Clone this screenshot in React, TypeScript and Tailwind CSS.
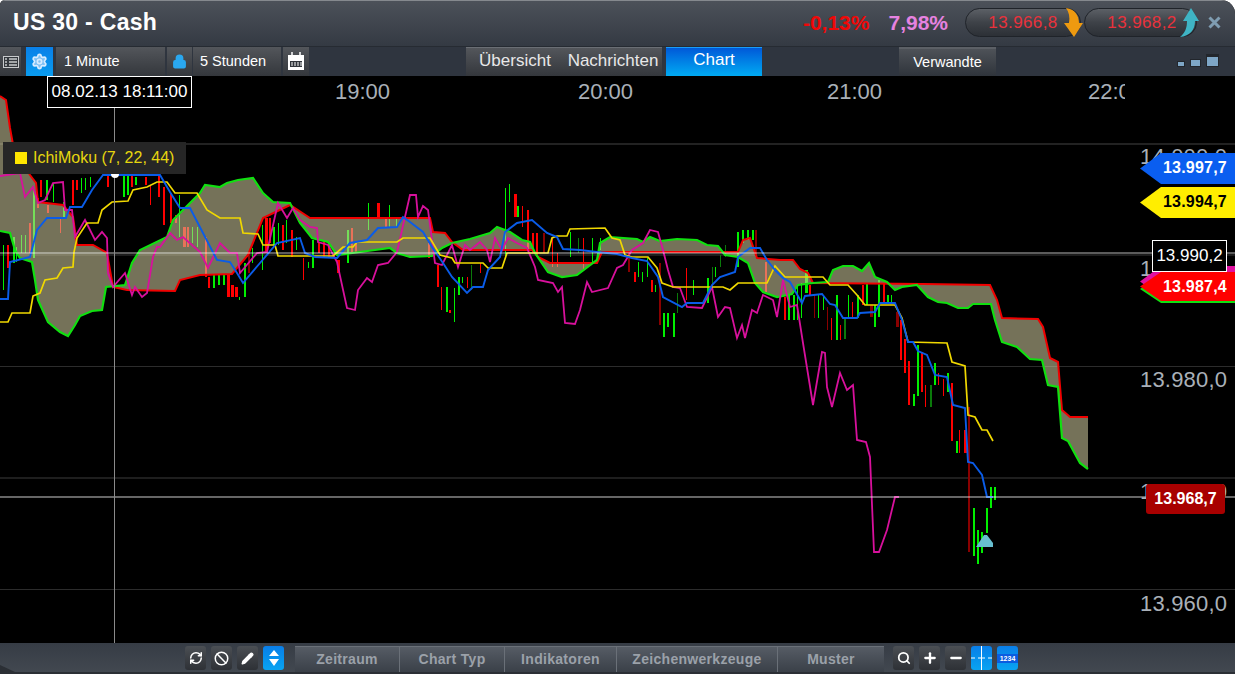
import { Ban, Lock, Minus, Pencil, Plus, RefreshCw, Search, Settings } from "lucide-react"

type Bar = [number, number, number, number]

const FONT = "font-['Liberation_Sans',Arial,sans-serif]"

const greenEdge = "0,231 10,233 15,250 20,258 32,262 35,280 38,300 48,322 60,332 68,336 75,325 80,316 92,311 102,310 106,287 125,285 132,263 140,250 167,237 173,220 200,193 205,185 220,187 227,183 238,180 253,178 263,193 273,202 290,203 300,223 312,238 328,242 337,255 360,252 390,248 397,253 410,257 432,256 442,248 452,243 470,239 490,233 497,227 510,232 522,240 530,242 535,253 548,272 562,277 577,275 597,260 600,243 610,237 637,239 643,242 650,237 660,241 677,239 697,240 707,245 718,246 725,255 738,257 748,263 755,283 763,292 777,297 792,294 798,285 813,283 828,282 833,270 843,266 853,266 862,271 869,263 875,277 887,282 895,290 902,287 917,285 928,297 938,302 947,303 958,308 968,308 973,304 991,304 995,320 1002,342 1017,347 1030,359 1042,360 1048,385 1058,387 1062,438 1068,441 1080,463 1088,469"
const redEdge = "0,96 6,100 10,128 14,150 30,175 36,183 38,202 63,205 73,217 77,245 93,245 107,253 113,287 127,290 175,291 180,280 200,275 232,274 248,255 263,218 290,205 310,218 430,218 433,232 445,233 452,242 463,250 533,250 538,257 550,263 597,263 602,252 738,252 743,240 750,238 757,258 780,260 793,260 800,269 808,273 813,283 923,284 990,285 997,300 1002,318 1038,319 1043,327 1050,358 1058,362 1062,410 1070,417 1088,417"
const cloud = `${greenEdge} ${redEdge.split(" ").reverse().join(" ")}`

const blueLine = "0,299 8,299 10,262 30,257 37,230 47,218 66,218 70,207 82,207 92,190 103,175 160,175 170,192 180,208 190,208 203,233 217,260 230,262 237,273 243,283 260,263 277,243 300,238 305,253 315,257 337,258 350,243 367,240 378,228 397,227 403,217 410,222 423,232 432,247 443,263 452,277 467,293 473,287 483,287 488,270 500,257 505,232 517,223 532,220 547,233 557,237 563,249 580,250 597,252 617,254 632,258 647,261 658,277 663,297 682,307 687,303 703,303 712,285 720,277 735,272 738,257 750,248 760,248 767,260 775,270 783,278 790,282 802,303 805,296 822,294 830,304 835,305 843,318 857,318 860,313 875,312 880,303 895,303 902,320 908,342 913,342 918,351 927,355 935,375 947,377 953,405 965,408 968,462 973,463 982,475 987,497 993,497"
const yellowLine = "0,322 8,322 12,313 30,313 33,296 40,293 45,280 57,278 63,268 73,267 74,252 77,238 87,223 98,223 102,210 112,202 128,201 133,190 147,187 157,182 167,182 175,193 197,193 207,210 220,218 240,218 243,233 258,234 263,245 275,245 278,256 333,256 343,247 353,247 357,242 397,242 403,238 430,238 440,255 452,258 455,263 483,263 488,268 502,268 507,253 548,253 552,238 557,236 567,236 570,229 605,228 612,238 620,240 625,255 632,257 648,257 657,268 662,283 673,287 723,287 730,290 738,283 767,283 775,266 785,277 823,277 830,285 848,285 857,295 865,305 895,305 902,318 908,342 947,343 952,362 965,366 968,415 975,417 982,430 987,430 993,441"
const magentaLine = "0,176 20,173 25,197 33,187 38,203 45,200 53,183 63,182 65,210 72,210 75,237 85,220 95,240 102,232 107,238 108,273 113,287 125,273 132,295 135,287 142,297 147,293 153,257 157,247 160,247 170,233 177,240 183,237 200,252 208,268 220,243 230,253 237,253 240,273 257,253 267,252 278,203 287,218 293,208 300,220 310,227 317,228 318,242 328,245 337,262 347,308 355,310 358,290 367,278 372,282 378,265 388,263 397,252 410,195 416,195 418,217 423,206 428,210 435,263 442,265 452,245 458,267 465,245 470,250 480,242 487,250 490,262 495,238 502,250 508,238 517,243 527,248 535,267 538,280 553,283 558,292 562,287 565,323 575,324 580,310 587,282 592,292 608,288 617,268 623,265 632,250 643,243 650,230 658,232 663,250 668,270 673,287 680,288 687,307 702,308 712,287 718,317 725,307 730,308 737,338 742,325 745,338 752,310 757,313 763,295 773,300 777,317 783,280 790,307 797,305 803,343 813,405 822,352 825,353 827,387 832,407 840,373 847,390 853,385 857,440 866,442 870,457 874,552 879,552 887,530 895,497 899,497"

const redBars: Bar[] = [
  [7,245,268,2],[40,180,197,2],[72,180,205,2],[76,180,190,2],[107,173,187,2],[131,175,187,2],[145,177,185,2],[150,185,205,1],[158,175,197,2],[163,187,225,2],[170,193,223,2],[175,215,223,2],[183,227,247,3],[187,227,247,2],[205,237,277,2],[208,277,288,2],[227,275,297,3],[231,285,297,3],[235,287,297,3],[265,218,253,3],[269,218,243,2],[282,225,250,2],[291,230,257,2],[303,258,280,1],[318,242,253,2],[323,242,257,2],[328,243,257,2],[337,260,273,3],[351,228,253,2],[355,242,252,2],[377,203,217,3],[385,217,227,2],[29,223,253,2],[37,198,208,2],[47,205,213,2],[60,218,233,1],
  [428,243,258,2],[437,265,287,2],[441,287,310,1],[449,310,313,2],[467,277,288,1],[480,263,273,1],[514,194,217,3],[522,206,227,1],[527,210,250,2],[532,233,253,2],[536,233,257,2],[552,238,267,1],[557,253,267,1],[583,238,270,1],[634,272,282,2],[651,280,292,2],[686,268,300,1],[765,262,292,2],
  [784,297,320,2],[809,285,295,2],[831,318,340,1],[840,325,340,1],[852,302,318,1],[862,285,305,2],[883,283,303,2],[900,320,360,2],[904,339,373,2],[908,361,405,2],[921,352,392,2],[925,385,407,1],[938,373,385,1],[943,379,396,1],[951,383,441,2],[959,430,453,1],[964,430,453,3],
]
const greenBars: Bar[] = [
  [3,245,290,1],[13,237,263,2],[16,247,262,1],[21,235,253,1],[25,235,253,1],[33,190,258,2],[46,180,200,2],[53,183,202,1],[63,202,218,2],[81,178,193,1],[85,178,190,1],[90,177,187,1],[123,175,197,2],[127,175,195,2],[135,177,185,2],[179,195,237,1],[192,227,243,1],[197,227,247,1],[213,275,288,2],[218,275,285,2],[223,275,285,2],[244,263,297,2],[239,297,300,1],[252,248,263,1],[262,225,270,1],[273,227,247,2],[278,223,245,1],[286,220,243,1],[296,237,250,1],[312,240,268,2],[308,262,268,1],[347,230,263,2],[368,203,230,1],[389,205,227,1],[396,218,227,1],
  [446,287,312,2],[454,288,322,1],[458,277,295,2],[462,277,283,1],[505,188,257,1],[509,184,202,1],[517,206,217,2],[570,232,257,1],[592,238,263,1],[600,238,250,1],[638,262,277,1],[642,272,282,1],[647,258,277,1],[655,285,292,1],[663,313,337,2],[667,313,327,2],[673,313,337,2],[693,280,295,1],[707,278,303,2],[715,267,277,1],[737,232,267,2],[742,230,243,2],[747,230,240,2],[752,230,240,2],
  [788,295,320,2],[793,295,320,2],[797,287,320,1],[801,283,318,1],[805,270,293,3],[818,295,318,1],[823,295,310,1],[836,295,340,2],[848,295,318,1],[857,295,318,2],[866,284,305,2],[874,305,327,2],[878,280,317,2],[887,295,303,2],[891,295,303,1],[913,394,406,2],[917,345,396,2],[934,363,385,2],[947,373,392,2],[956,441,453,2],[973,508,556,2],[977,530,564,2],[981,532,553,2],[986,508,533,2],[990,487,508,2],[994,487,500,2],
]
const darkRedBars: Bar[] = [
  [248,253,273,2],[543,233,253,2],[628,253,272,2],[659,263,325,2],[755,230,257,2],[814,295,318,1],[827,307,330,1],[870,305,317,3],[896,312,327,3],[968,407,552,2],
]
const darkGreenBars: Bar[] = [
  [471,265,290,1],[578,238,253,1],[677,293,313,1],[712,267,287,1],[720,255,267,1],[725,245,257,1],[844,317,339,2],[930,385,407,2],
]

function Bars({ bars, color }: { bars: Bar[]; color: string }) {
  return (
    <>
      {bars.map(([x, y1, y2, w]) => (
        <rect key={`${x}-${y1}`} x={x} y={y1} width={w} height={y2 - y1} fill={color} />
      ))}
    </>
  )
}

function ChartDrawing() {
  return (
    <svg className="absolute inset-0 h-full w-full" viewBox="0 76 1235 567">
      <rect x="0" y="143" width="1235" height="2" fill="#222" />
      <rect x="0" y="254" width="1235" height="2" fill="#1c1c1c" />
      <rect x="0" y="366" width="1235" height="1" fill="#2c2c2c" />
      <rect x="0" y="477" width="1235" height="2" fill="#1e1e1e" />
      <rect x="0" y="589" width="1235" height="1" fill="#2c2c2c" />
      <Bars bars={redBars} color="#ff0000" />
      <Bars bars={greenBars} color="#00f000" />
      <Bars bars={darkRedBars} color="#8a0000" />
      <Bars bars={darkGreenBars} color="#0a7a0a" />
      <polygon points={cloud} fill="#d5cfa2" fillOpacity="0.55" />
      <polyline points={redEdge} fill="none" stroke="#f00000" strokeWidth="2" />
      <polyline points={greenEdge} fill="none" stroke="#10e010" strokeWidth="2.2" />
      <polyline points={magentaLine} fill="none" stroke="#d8109c" strokeWidth="1.8" />
      <polyline points={yellowLine} fill="none" stroke="#f0d800" strokeWidth="1.7" />
      <polyline points={blueLine} fill="none" stroke="#0a5ce8" strokeWidth="1.9" />
      <rect x="0" y="252" width="1235" height="2" fill="#fff" fillOpacity="0.36" />
      <rect x="0" y="496" width="1235" height="2" fill="#fff" fillOpacity="0.4" />
      <rect x="114" y="108" width="1" height="535" fill="#8a8a8a" />
      <circle cx="115" cy="174" r="4" fill="#fff" />
      <polygon points="976,547 984,535 987,535 993,543 993,547" fill="#68bfd0" />
    </svg>
  )
}

function PriceTag({ top, height, text, color, textColor }: { top: string; height: string; text: string; color: string; textColor: string }) {
  return (
    <div className={`absolute right-0 w-[95px] ${top} ${height}`}>
      <svg className="absolute inset-0 h-full w-full" viewBox="0 0 95 31" preserveAspectRatio="none">
        <polygon points="0,15.5 21,0 95,0 95,31 21,31" fill={color} />
      </svg>
      <span className={`absolute left-[23px] top-[6px] text-[16px] font-bold leading-[18px] tracking-[0.2px] ${textColor}`}>{text}</span>
    </div>
  )
}

function ToolButton({ children, blue }: { children: React.ReactNode; blue?: boolean }) {
  return (
    <div className={`flex h-[24px] w-[21px] items-center justify-center rounded-[3px] ${blue ? "bg-gradient-to-b from-[#0a7ee8] to-[#0aa4f2]" : "bg-gradient-to-b from-[#4b4f54] to-[#2e3136]"}`}>
      {children}
    </div>
  )
}

export default function App() {
  const bottomTabs = [
    { label: "Zeitraum", width: "w-[105px]" },
    { label: "Chart Typ", width: "w-[105px]" },
    { label: "Indikatoren", width: "w-[112px]" },
    { label: "Zeichenwerkzeuge", width: "w-[161px]" },
    { label: "Muster", width: "w-[106px]" },
  ]

  return (
    <div className={`h-[686px] w-[1235px] overflow-hidden bg-white ${FONT}`}>
      <div className="flex h-[674px] flex-col overflow-hidden rounded-tl-[5px] rounded-tr-[14px] bg-black">
        {/* title row */}
        <div className="flex h-[47px] items-center border-t border-b border-t-[#85898e] border-b-[#262b32] bg-gradient-to-b from-[#4c5159] to-[#343a43] pb-[2px]">
          <h1 className="ml-[13px] text-[23px] font-bold tracking-[0.3px] text-white">US 30 - Cash</h1>
          <span className="ml-auto text-[21px] font-bold text-[#f00808]">-0,13%</span>
          <span className="ml-[19px] text-[21px] font-bold text-[#e682e0]">7,98%</span>
          <div className="relative ml-[17px] flex h-[29px] w-[116px] items-center justify-center rounded-full border border-[#1f2329] bg-gradient-to-b from-[#5c6066] via-[#3e4248] to-[#2c3036] text-[17px] tracking-[0.4px] text-[#e8323c]">
            13.966,8
            <svg className="absolute right-[-3px] top-[-1px]" width="20" height="30" viewBox="0 0 20 30">
              <path d="M3 0 C12 1 16 8 16 15 L20 15 L11 29 L1 15 L6 15 C7 9 6 4 3 0 Z" fill="#ee9a10" />
            </svg>
          </div>
          <div className="relative ml-[3px] flex h-[29px] w-[113px] items-center justify-center rounded-full border border-[#1f2329] bg-gradient-to-b from-[#5c6066] via-[#3e4248] to-[#2c3036] pl-[3px] text-[17px] tracking-[0.4px] text-[#e8323c]">
            13.968,2
            <svg className="absolute right-[-4px] top-[-1px]" width="20" height="30" viewBox="0 0 20 30">
              <path d="M11 0 L19 13 L15 13 C15 22 10 28 0 29 C5 25 7 20 7 13 L3 13 Z" fill="#3fb4c4" />
            </svg>
          </div>
          <svg className="ml-[11px] mr-[14px]" width="13" height="13" viewBox="0 0 13 13">
            <path d="M1.5 1.5 L11.5 11.5 M11.5 1.5 L1.5 11.5" stroke="#7f9db2" strokeWidth="3" />
          </svg>
        </div>

        {/* toolbar row */}
        <div className="flex h-[29px] items-stretch bg-[#2f353f] text-[14.5px] text-white">
          <div className="flex w-[21px] items-center justify-center bg-gradient-to-b from-[#53565b] to-[#34373c]">
            <svg width="16" height="14" viewBox="0 0 16 14">
              <rect x="0.5" y="1.5" width="15" height="11" fill="#34383d" stroke="#c8cacc" />
              <path d="M2 4 H4 M6 4 H14 M2 7 H4 M6 7 H14 M2 10 H4 M6 10 H14" stroke="#c8cacc" strokeWidth="1.4" />
            </svg>
          </div>
          <div className="ml-[5px] flex w-[27px] items-center justify-center bg-gradient-to-b from-[#0a80e8] to-[#0a9cf0]">
            <Settings size={17} color="#d8ecff" fill="#7fc0f4" strokeWidth={2.4} />
          </div>
          <div className="ml-[3px] flex w-[109px] items-center bg-gradient-to-b from-[#53565b] to-[#34373c] pl-[8px]">1 Minute</div>
          <div className="ml-[2px] flex w-[25px] items-center justify-center bg-gradient-to-b from-[#53565b] to-[#34373c]">
            <Lock size={15} color="#2aa8f0" fill="#2aa8f0" strokeWidth={2.5} />
          </div>
          <div className="ml-[1px] flex w-[88px] items-center bg-gradient-to-b from-[#53565b] to-[#34373c] pl-[7px]">5 Stunden</div>
          <div className="ml-[2px] flex w-[26px] items-center justify-center bg-gradient-to-b from-[#53565b] to-[#34373c]">
            <svg width="18" height="20" viewBox="0 0 18 20">
              <rect x="1" y="3" width="16" height="15" fill="#fff" />
              <rect x="3" y="9" width="12" height="6" fill="#30343a" />
              <path d="M5 10 V14 M8 10 V14 M11 10 V14 M14 10 V14" stroke="#fff" />
              <path d="M5 0 V3 M13 0 V3" stroke="#fff" strokeWidth="1.5" />
            </svg>
          </div>
          <div className="ml-[157px] flex w-[98px] items-center justify-center border-t border-[#6a6e74] bg-gradient-to-b from-[#53565b] to-[#34373c] pb-[3px] text-[17px] text-[#e8e8e8]">Übersicht</div>
          <div className="flex w-[98px] items-center justify-center border-t border-[#6a6e74] bg-gradient-to-b from-[#53565b] to-[#34373c] pb-[3px] text-[17px] text-[#e8e8e8]">Nachrichten</div>
          <div className="ml-[4px] flex w-[96px] items-center justify-center border-t border-[#1a9cf8] bg-gradient-to-b from-[#0058d8] to-[#00aaf2] pb-[4px] text-[17px]">Chart</div>
          <div className="ml-[137px] flex w-[97px] items-end justify-center border-t-2 border-[#5c6066] bg-gradient-to-b from-[#4e5258] to-[#2f343b] pb-[2px]">Verwandte</div>
          <div className="ml-auto mr-[16px] flex items-start gap-[5px] pt-[7px]">
            <div className="mt-[7px] h-[6px] w-[8px] border border-[#22262c] bg-[#7ea6c6]" />
            <div className="mt-[5px] h-[8px] w-[11px] border border-[#22262c] bg-[#7ea6c6]" />
            <div className="h-[13px] w-[13px] border border-[#22262c] border-t-[3px] bg-[#7ea6c6]" />
          </div>
        </div>

        {/* chart */}
        <div className="relative min-h-0 flex-1 overflow-hidden bg-black">
          <ChartDrawing />
          {[
            { text: "19:00", left: "left-[335px]" },
            { text: "20:00", left: "left-[578px]" },
            { text: "21:00", left: "left-[827px]" },
          ].map((t) => (
            <span key={t.text} className={`absolute top-[4px] text-[22px] leading-[24px] text-[#a9b0b8] ${t.left}`}>{t.text}</span>
          ))}
          <span className="absolute left-[1088px] top-[4px] w-[37px] overflow-hidden text-[22px] leading-[24px] whitespace-nowrap text-[#a9b0b8]">22:00</span>

          {[
            { text: "14.000,0", top: "top-[69px]" },
            { text: "13.990,0", top: "top-[181px]" },
            { text: "13.980,0", top: "top-[292px]" },
            { text: "13.970,0", top: "top-[404px]" },
            { text: "13.960,0", top: "top-[516px]" },
          ].map((t) => (
            <span key={t.text} className={`absolute left-[1140px] text-[22px] leading-[24px] tracking-[0.2px] text-[#a9b0b8] ${t.top}`}>{t.text}</span>
          ))}

          <div className="absolute left-[47px] top-0 flex h-[32px] w-[145px] items-center justify-center border border-white bg-black text-[17px] text-white">08.02.13 18:11:00</div>

          <div className="absolute left-[3px] top-[66px] flex h-[32px] w-[183px] items-center bg-[#262626] pl-[12px] text-[16px] text-[#e6d60e]">
            <span className="mr-[6px] h-[12px] w-[12px] bg-[#ffe600]" />
            IchiMoku (7, 22, 44)
          </div>

          <PriceTag top="top-[77px]" height="h-[31px]" text="13.997,7" color="#0a5ef0" textColor="text-white" />
          <PriceTag top="top-[111px]" height="h-[31px]" text="13.994,7" color="#ffee00" textColor="text-black" />
          <PriceTag top="top-[190px]" height="h-[31px]" text="" color="#e010a0" textColor="text-white" />
          <PriceTag top="top-[199px]" height="h-[28px]" text="" color="#10e010" textColor="text-white" />
          <PriceTag top="top-[196px]" height="h-[29px]" text="13.987,4" color="#ff0000" textColor="text-white" />
          <div className="absolute left-[1152px] top-[164px] flex h-[32px] w-[75px] items-center justify-center border border-white bg-black text-[17px] text-white">13.990,2</div>
          <div className="absolute left-[1146px] top-[408px] flex h-[30px] w-[79px] items-center justify-center rounded-[3px] bg-[#a80000] text-[16px] font-bold text-white">13.968,7</div>
        </div>

        {/* bottom bar */}
        <div className="relative flex h-[31px] items-end border-b-2 border-[#2b2f35] bg-gradient-to-b from-[#363c45] to-[#424850] pl-[185px]">
          <svg className="absolute bottom-0 left-0" width="15" height="7" viewBox="0 0 15 7">
            <path d="M0 0 L15 7 H0 Z" fill="#2b2f35" />
          </svg>
          <div className="mb-[2px] flex gap-[5px]">
            <ToolButton><RefreshCw size={14} color="#fff" strokeWidth={2.6} /></ToolButton>
            <ToolButton><Ban size={15} color="#fff" strokeWidth={2.4} /></ToolButton>
            <ToolButton><Pencil size={13} color="#fff" fill="#fff" /></ToolButton>
            <ToolButton blue>
              <svg width="12" height="18" viewBox="0 0 12 18">
                <path d="M6 1 L11 7 H1 Z M1 10 H11 L6 17 Z" fill="#fff" />
              </svg>
            </ToolButton>
          </div>
          <div className="ml-[11px] flex h-[26px] items-stretch border-t border-[#6a7078] bg-gradient-to-b from-[#565c65] to-[#3a4048]">
            {bottomTabs.map((tab) => (
              <div key={tab.label} className={`flex items-center justify-center border-r border-[#6a7078] text-[14px] font-bold tracking-[0.3px] text-[#9ba1a9] last:border-r-0 ${tab.width}`}>
                {tab.label}
              </div>
            ))}
          </div>
          <div className="mb-[2px] ml-[9px] flex gap-[5px]">
            <ToolButton><Search size={14} color="#fff" strokeWidth={3} /></ToolButton>
            <ToolButton><Plus size={16} color="#fff" strokeWidth={3.5} /></ToolButton>
            <ToolButton><Minus size={16} color="#fff" strokeWidth={3.5} /></ToolButton>
            <ToolButton blue>
              <svg width="21" height="24" viewBox="0 0 21 24">
                <path d="M10.5 0 V24 M0 12 H4 M7 12 H14 M17 12 H21" stroke="#fff" />
              </svg>
            </ToolButton>
            <ToolButton blue>
              <div className="w-full bg-[#0a5ce0] text-center text-[7px] font-bold leading-[9px] text-white">1234</div>
            </ToolButton>
          </div>
        </div>
      </div>
    </div>
  )
}
